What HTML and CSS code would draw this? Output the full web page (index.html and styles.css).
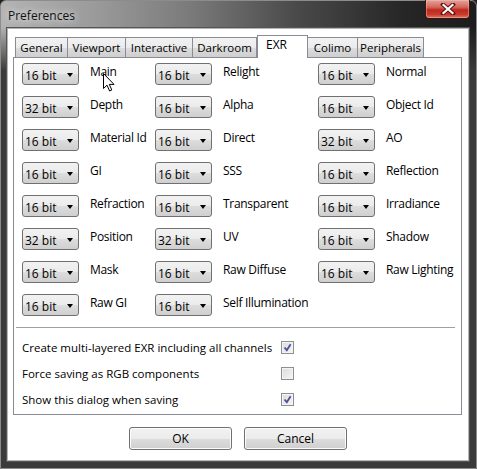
FILE: index.html
```html
<!DOCTYPE html>
<html>
<head>
<meta charset="utf-8">
<link rel="stylesheet" href="styles.css">
</head>
<body>
<div class="window">
  <div class="titlebar">
    <span class="title">Preferences</span>
    <div class="close">
      <svg width="16" height="12" viewBox="0 0 16 12"><path d="M3 1.5 L13 10.5 M13 1.5 L3 10.5" stroke="#5a1010" stroke-width="4" stroke-linecap="square"/><path d="M3.5 2 L12.5 10 M12.5 2 L3.5 10" stroke="#fff" stroke-width="2.2" stroke-linecap="square"/></svg>
    </div>
  </div>
  <div class="client">
    <div class="tabs">
      <div class="tab t1">General</div>
      <div class="tab t2">Viewport</div>
      <div class="tab t3">Interactive</div>
      <div class="tab t4">Darkroom</div>
      <div class="tab t5 active">EXR</div>
      <div class="tab t6">Colimo</div>
      <div class="tab t7">Peripherals</div>
    </div>
    <div class="panel">
      <div class="grid">
        <div class="cell"><div class="combo"><span>16 bit</span><i class="arrow"></i></div><span class="lbl">Main</span></div>
        <div class="cell"><div class="combo"><span>16 bit</span><i class="arrow"></i></div><span class="lbl">Relight</span></div>
        <div class="cell"><div class="combo"><span>16 bit</span><i class="arrow"></i></div><span class="lbl">Normal</span></div>

        <div class="cell"><div class="combo"><span>32 bit</span><i class="arrow"></i></div><span class="lbl">Depth</span></div>
        <div class="cell"><div class="combo"><span>16 bit</span><i class="arrow"></i></div><span class="lbl">Alpha</span></div>
        <div class="cell"><div class="combo"><span>16 bit</span><i class="arrow"></i></div><span class="lbl">Object Id</span></div>

        <div class="cell"><div class="combo"><span>16 bit</span><i class="arrow"></i></div><span class="lbl">Material Id</span></div>
        <div class="cell"><div class="combo"><span>16 bit</span><i class="arrow"></i></div><span class="lbl">Direct</span></div>
        <div class="cell"><div class="combo"><span>32 bit</span><i class="arrow"></i></div><span class="lbl">AO</span></div>

        <div class="cell"><div class="combo"><span>16 bit</span><i class="arrow"></i></div><span class="lbl">GI</span></div>
        <div class="cell"><div class="combo"><span>16 bit</span><i class="arrow"></i></div><span class="lbl">SSS</span></div>
        <div class="cell"><div class="combo"><span>16 bit</span><i class="arrow"></i></div><span class="lbl">Reflection</span></div>

        <div class="cell"><div class="combo"><span>16 bit</span><i class="arrow"></i></div><span class="lbl">Refraction</span></div>
        <div class="cell"><div class="combo"><span>16 bit</span><i class="arrow"></i></div><span class="lbl">Transparent</span></div>
        <div class="cell"><div class="combo"><span>16 bit</span><i class="arrow"></i></div><span class="lbl">Irradiance</span></div>

        <div class="cell"><div class="combo"><span>32 bit</span><i class="arrow"></i></div><span class="lbl">Position</span></div>
        <div class="cell"><div class="combo"><span>32 bit</span><i class="arrow"></i></div><span class="lbl">UV</span></div>
        <div class="cell"><div class="combo"><span>16 bit</span><i class="arrow"></i></div><span class="lbl">Shadow</span></div>

        <div class="cell"><div class="combo"><span>16 bit</span><i class="arrow"></i></div><span class="lbl">Mask</span></div>
        <div class="cell"><div class="combo"><span>16 bit</span><i class="arrow"></i></div><span class="lbl">Raw Diffuse</span></div>
        <div class="cell"><div class="combo"><span>16 bit</span><i class="arrow"></i></div><span class="lbl">Raw Lighting</span></div>

        <div class="cell"><div class="combo"><span>16 bit</span><i class="arrow"></i></div><span class="lbl">Raw GI</span></div>
        <div class="cell"><div class="combo"><span>16 bit</span><i class="arrow"></i></div><span class="lbl">Self Illumination</span></div>
      </div>
      <div class="sep"></div>
      <div class="checks">
        <div class="chk-row"><span class="chk-lbl">Create multi-layered EXR including all channels</span><span class="box checked"><svg width="9" height="9" viewBox="0 0 9 9"><path d="M1.5 4.5 L3.8 7.2 L7.6 1.2" fill="none" stroke="#4b4f9a" stroke-width="1.8"/></svg></span></div>
        <div class="chk-row"><span class="chk-lbl">Force saving as RGB components</span><span class="box"></span></div>
        <div class="chk-row"><span class="chk-lbl">Show this dialog when saving</span><span class="box checked"><svg width="9" height="9" viewBox="0 0 9 9"><path d="M1.5 4.5 L3.8 7.2 L7.6 1.2" fill="none" stroke="#4b4f9a" stroke-width="1.8"/></svg></span></div>
      </div>
    </div>
    <div class="buttons">
      <div class="btn">OK</div>
      <div class="btn">Cancel</div>
    </div>
  </div>
  <svg class="cursor" width="13" height="19" viewBox="0 0 13 19"><path d="M0.5 0.5 L0.5 15.5 L4 12.2 L6.6 18 L8.8 17 L6.3 11.4 L11 11.4 Z" fill="#fff" stroke="#000" stroke-width="1" stroke-linejoin="miter"/></svg>
</div>
</body>
</html>
```
FILE: styles.css
```css
html, body {
  margin: 0;
  padding: 0;
  background: #222;
}
body {
  font-family: "Open Sans", "Noto Sans", sans-serif;
  font-size: 11.5px;
  color: #000;
}
.window {
  position: relative;
  width: 477px;
  height: 469px;
  box-sizing: border-box;
  border: 1px solid #8c8c8c;
  border-radius: 6px 6px 0 0;
  padding: 0 7px 7px 6px;
  display: flex;
  flex-direction: column;
  background:
    linear-gradient(to bottom, rgba(58,58,58,0) 0px, rgba(58,58,58,0) 26px, #3a3a3a 70px),
    linear-gradient(to right, #b4b4b4 0%, #9a9a9a 20%, #7a7a7a 40%, #4a4a4a 62%, #262626 85%, #1c1c1c 100%);
}
.titlebar {
  height: 27px;
  display: flex;
  align-items: flex-start;
  position: relative;
}
.title {
  margin-top: 6px;
  margin-left: 1px;
  font-size: 12px;
  color: #111;
  text-shadow: 0 0 6px rgba(235,235,235,1), 0 0 10px rgba(220,220,220,0.8);
}
.close {
  position: absolute;
  right: -1px;
  top: -1px;
  width: 45px;
  height: 19px;
  box-sizing: border-box;
  border: 1px solid #3a1512;
  border-top: none;
  border-radius: 0 0 4px 4px;
  background: linear-gradient(to bottom, #e3a59c 0%, #d4665a 40%, #c0291c 55%, #c93a2c 80%, #d9776a 100%);
  display: flex;
  align-items: center;
  justify-content: center;
  box-shadow: inset 0 0 0 1px rgba(255,200,190,0.4);
}
.client {
  flex: 1;
  background: #fff;
  border: 1px solid #b4b4b4;
  box-shadow: 0 0 0 1px #555;
  display: flex;
  flex-direction: column;
}
.tabs {
  display: flex;
  align-items: flex-end;
  height: 22px;
  margin-top: 6px;
  padding-left: 7px;
  position: relative;
  z-index: 1;
}
.tab {
  height: 20px;
  box-sizing: border-box;
  border: 1px solid #898c95;
  border-bottom: none;
  line-height: 19px;
  text-align: center;
  white-space: nowrap;
  background: linear-gradient(to bottom, #f2f2f2 0%, #ebebeb 50%, #dddddd 51%, #cfcfcf 100%);
  color: #000;
}
.tab + .tab {
  border-left: none;
}
.t1 { width: 53px; }
.t2 { width: 58px; }
.t3 { width: 67px; }
.t4 { width: 64px; }
.t5 { width: 51px; }
.t6 { width: 50px; }
.t7 { width: 66px; }
.tab.active {
  height: 23px;
  margin-bottom: -1px;
  background: #fff;
  border-left: 1px solid #898c95;
  line-height: 18px;
  font-size: 12px;
  text-align: left;
  padding-left: 8px;
}
.tab.active + .tab {
  border-left: none;
}
.panel {
  margin: 0 6px 0 5px;
  border: 1px solid #898c95;
  padding: 5px 8px 2px 8px;
  background: #fff;
}
.grid {
  display: grid;
  grid-template-columns: 133px 163px auto;
  grid-auto-rows: 23px;
  row-gap: 10px;
}
.cell {
  display: flex;
  align-items: flex-start;
  white-space: nowrap;
}
.combo {
  width: 57px;
  height: 22px;
  box-sizing: border-box;
  border: 1px solid #707070;
  border-radius: 3px;
  background: linear-gradient(to bottom, #f2f2f2 0%, #ebebeb 50%, #dddddd 51%, #cfcfcf 100%);
  display: flex;
  align-items: center;
  justify-content: space-between;
  padding: 2px 5px 0 2px;
  font-size: 12px;
}
.arrow {
  width: 0;
  height: 0;
  border-left: 3.5px solid transparent;
  border-right: 3.5px solid transparent;
  border-top: 4px solid #000;
}
.lbl {
  margin-left: 11px;
  line-height: 16px;
  margin-top: 1px;
  font-size: 12px;
  letter-spacing: -0.3px;
}
.sep {
  height: 1px;
  background: #a0a0a0;
  margin: 10px -2px 0 -6px;
}
.checks {
  margin-top: 6px;
}
.chk-row {
  height: 26px;
  display: flex;
  align-items: center;
}
.chk-lbl {
  width: 259px;
  white-space: nowrap;
}
.box {
  width: 13px;
  height: 13px;
  box-sizing: border-box;
  border: 1px solid #8e8f8f;
  background: linear-gradient(135deg, #dcdcdc 0%, #f6f6f6 100%);
  display: flex;
  align-items: center;
  justify-content: center;
  box-shadow: inset 0 0 0 1px #f4f4f4;
}
.buttons {
  display: flex;
  justify-content: center;
  gap: 12px;
  margin-top: 12px;
}
.btn {
  width: 103px;
  height: 23px;
  box-sizing: border-box;
  border: 1px solid #707070;
  border-radius: 3px;
  background: linear-gradient(to bottom, #f2f2f2 0%, #ebebeb 50%, #dddddd 51%, #cfcfcf 100%);
  box-shadow: inset 0 0 0 1px #fcfcfc;
  text-align: center;
  line-height: 21px;
  font-size: 12px;
}
.cursor {
  position: absolute;
  left: 102px;
  top: 72px;
}
```
